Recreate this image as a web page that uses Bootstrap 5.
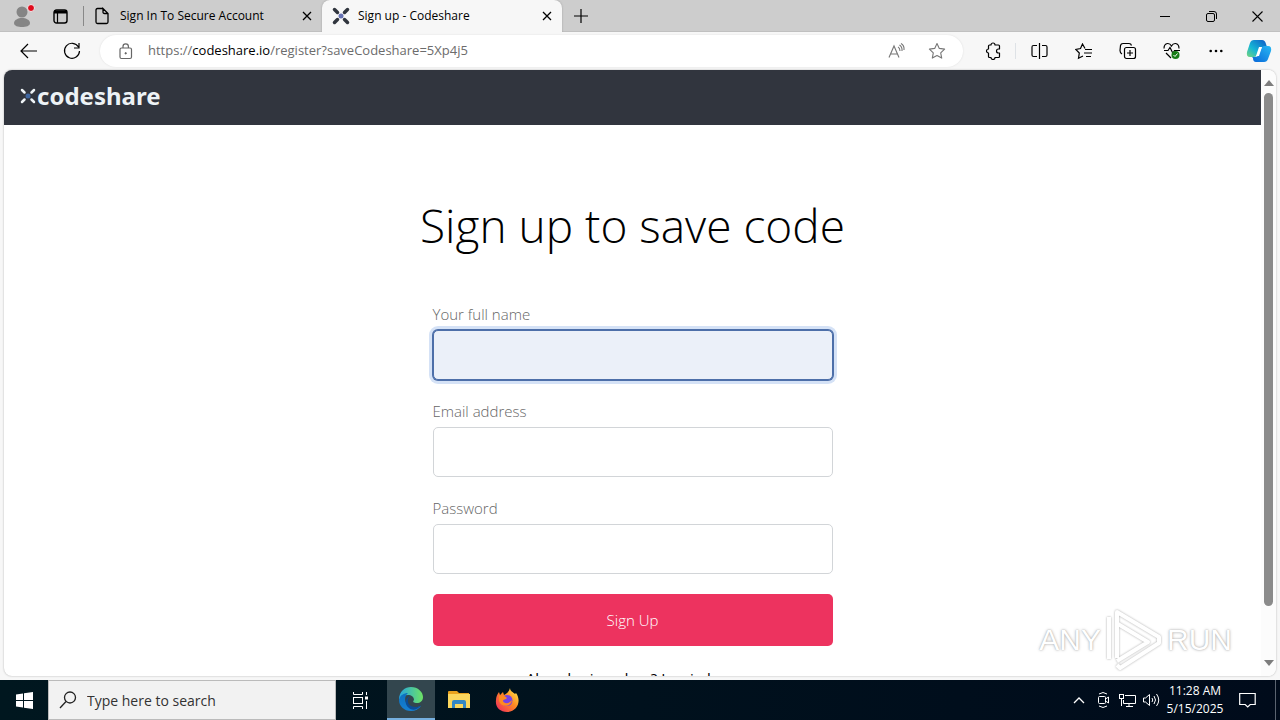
<!DOCTYPE html>
<html lang="en">
<head>
<meta charset="utf-8">
<meta name="viewport" content="width=device-width, initial-scale=1">
<title>Sign up - Codeshare</title>
<link href="https://cdn.jsdelivr.net/npm/bootstrap@5.3.0/dist/css/bootstrap.min.css" rel="stylesheet">
<style>
body{font-family:"Open Sans","Noto Sans",sans-serif;background:#f7f7f7;color:#000;fill:none;stroke:currentColor}
svg{display:block;flex:none}
button,.tool{border:0;background:none;padding:0;color:inherit;display:flex;align-items:center;justify-content:center}
.tabstrip{height:32px;background:#cdcdcd;font-size:12px;box-shadow:inset 0 -1px #c0c0c0}
.tab{width:238px;padding:0 10px;gap:10px}
.tab.on{width:240px;gap:8px;background:#f7f7f7;border-radius:8px 8px 0 0;box-shadow:0 0 2px #999;clip-path:inset(0 -3px 0 -3px)}
.strip-line{width:1px;height:20px;background:#888;margin-left:15px}
.wc{width:46px;height:32px}
.toolbar{height:38px;padding-left:6px}
.tool{width:44px;height:32px}
.tool.wide{width:46px}
.tool.slim{width:36px}
.tool.copilot{width:42px}
.address{height:32px;background:#fff;border-radius:16px;box-shadow:0 0 2px #ddd;font-size:13px;margin-left:6px}
.url{color:#6c6c6c}
.url b{font-weight:400;color:#000}
.divide{height:16px}
.viewport-box{margin:0 4px 4px;border-radius:8px;background:#fff;box-shadow:0 0 2px #aaa;min-height:0}
.site-head{height:55px;background:#31353e;padding:0 16px 4px}
.brand{font:bold 24px/32px "Noto Sans","Open Sans",sans-serif;color:#edf2f5}
.scroller{width:15px;background:#fcfcfc;padding:8px 0}
.thumb{width:9px;background:#8b8b8b;border-radius:5px;margin:6px 0 53px}
h1{font-size:46px;line-height:64px;font-weight:300;margin:68px 0 45px;white-space:nowrap}
.signup{width:400px;max-width:100%}
.signup label{display:block;font-size:15px;line-height:24px;font-weight:300;color:#666;margin-bottom:4px}
.signup .form-control{height:50px;border:1px solid #d2d5d8;border-radius:5px;margin-bottom:19px}
.signup .form-control:focus,.signup .first{background:#ebf0f9;border-color:#4d6fa9;box-shadow:0 0 0 1px #4d6fa9,0 0 0 4px #d5e2f6}
.signup .btn-go{background:#ed335f;color:#fff;height:52px;border-radius:5px;font-size:15px;font-weight:300;width:100%;margin-top:20px}
.login{font-size:15px;line-height:20px;margin:22px 0 0;font-weight:400}
.login a{color:#000;text-decoration:none}
.watermark{right:28px;bottom:4px;gap:4px;color:#fff;font:30px/60px "Liberation Sans",sans-serif;text-shadow:0 0 3px #aaa,0 0 1px #bbb;pointer-events:none}
.watermark svg{filter:drop-shadow(0 0 1px #aaa)}
.taskbar{height:40px;background:linear-gradient(90deg,#00171f,#000b1b);color:#fff}
.task{width:48px;height:40px}
.task.view{width:48px}
.task.on{background:#33464e;border-bottom:2px solid #76b0df;margin-left:3px}
.find{width:288px;background:#f2f2f2;border:1px solid #bbb;color:#222;padding-left:10px;gap:10px}
.find input{border:0;outline:0;background:none;font-size:14px;min-width:0;padding:0;color:#222}
.find input::placeholder{color:#333;opacity:1}
.tray{width:24px;height:40px}
.tray.note{width:40px}
.clock{width:64px;font:12px/18px "Open Sans",sans-serif;text-align:center;white-space:nowrap}
.peek{width:5px;height:40px;border-left:1px solid #5a6370}
</style>
</head>
<body class="vh-100 d-flex flex-column overflow-hidden">
<header class="tabstrip flex-shrink-0 d-flex align-items-center">
  <button class="ms-2 me-3" aria-label="Profile"><svg width="29" height="28" stroke="none"><circle cx="14" cy="10" r="5.5" fill="#858585"/><path d="M6 21c0-3 4-5 8-5s8 2 8 5-4 4-8 4-8-1-8-4z" fill="#858585"/><circle cx="23" cy="6" r="3.5" fill="#e00b1c" stroke="#eee"/></svg></button>
  <button aria-label="Tab actions"><svg width="15" height="15"><rect x="1" y="1" width="13" height="13" rx="2.5" stroke-width="1.4"/><path d="M1 3h13" stroke-width="3"/><path d="M4.500 4v10" stroke-width="1.200"/></svg></button>
  <span class="strip-line"></span>
  <div class="tab d-flex align-items-center h-100">
    <svg width="16" height="18"><path d="M9 1.500H3.500Q2 1.500 2 3v12q0 1.500 1.500 1.500h9Q14 16.500 14 15V6.500L9 1.500V5q0 1.500 1.500 1.500H14" stroke-width="1.300"/></svg>
    <span class="flex-grow-1 text-nowrap">Sign In To Secure Account</span>
    <button aria-label="Close tab"><svg width="10" height="10"><path d="M1 1l8 8M9 1L1 9" stroke-width="1.300"/></svg></button>
  </div>
  <div class="tab on d-flex align-items-center h-100">
    <svg width="18" height="18" stroke-width="3.500" stroke-linecap="round" stroke="#30353e"><path d="M2.500 2.500l3 3M15.500 2.500l-3 3M2.500 15.500l3-3M15.500 15.500l-3-3"/><circle cx="9" cy="9" r="2.500" fill="#6672b4" stroke="none"/></svg>
    <span class="flex-grow-1">Sign up - Codeshare</span>
    <button aria-label="Close tab"><svg width="10" height="10"><path d="M1 1l8 8M9 1L1 9" stroke-width="1.300"/></svg></button>
  </div>
  <button class="ms-2 ps-1" aria-label="New tab"><svg width="14" height="14"><path d="M7 0v14M0 7h14" stroke-width="1.200"/></svg></button>
  <div class="ms-auto d-flex">
    <button class="wc" aria-label="Minimize"><svg width="10" height="10"><path d="M0 5.500h10"/></svg></button>
    <button class="wc" aria-label="Restore"><svg width="11" height="11"><rect x=".5" y="2.500" width="8" height="8" rx="1.500"/><path d="M3 .5h5q2.500 0 2.500 2.500v5"/></svg></button>
    <button class="wc" aria-label="Close"><svg width="11" height="11"><path d="M.5.5l10 10M10.500.5l-10 10" stroke-width="1.100"/></svg></button>
  </div>
</header>
<nav class="toolbar flex-shrink-0 d-flex align-items-center" aria-label="Browser">
  <button class="tool" aria-label="Back"><svg width="17" height="16"><path d="M8 1L1 8l7 7M1 8h16" stroke-width="1.200"/></svg></button>
  <button class="tool" aria-label="Refresh"><svg width="18" height="18"><path d="M15.500 5A7.500 7.500 0 1 0 16.500 9M16 1v5h-5" stroke-width="1.200"/></svg></button>
  <div class="address flex-grow-1 d-flex align-items-center px-1">
    <button class="tool" aria-label="Site information"><svg width="14" height="17" stroke="#666"><rect x="1" y="5" width="11.500" height="10.500" rx="1.500" stroke-width="1.200"/><path d="M4 5V3.500a2.700 2.700 0 0 1 5.400 0V5" stroke-width="1.200"/><circle cx="6.700" cy="10.300" r=".7" fill="#555"/></svg></button>
    <span class="url flex-grow-1 text-nowrap">https://<b>codeshare.io</b>/register?saveCodeshare=5Xp4j5</span>
    <button class="tool slim" aria-label="Read aloud"><svg width="18" height="16" stroke="#777"><path d="M1 14.500L6 3l5 11.500M2.500 11h7M10 4q2 1 2 4M11.500 2q3 2 2.500 6M13 .5q3.500 2 3 6.500" stroke-width="1.100"/></svg></button>
    <button class="tool" aria-label="Add to favorites"><svg width="18" height="18" stroke="#777"><path d="M9 1.500l2.300 4.900 5.300.7-3.900 3.700 1 5.300L9 13.500l-4.700 2.600 1-5.300L1.400 7.100l5.300-.7z" stroke-width="1.100" stroke-linejoin="round"/></svg></button>
  </div>
  <button class="tool ms-2" aria-label="Extensions"><svg width="17" height="18"><path d="M4.500 3H6a2 2 0 0 1 4 0h3.500q1 0 1 1v3h-1a2 2 0 0 0 0 4h1v3.500q0 1-1 1H10a2 2 0 0 1-4 0H4.500q-1 0-1-1V11a2 2 0 0 1 0-4V4q0-1 1-1z" stroke-width="1.200" stroke-linejoin="round"/></svg></button>
  <span class="border-start divide"></span>
  <button class="tool wide" aria-label="Split screen"><svg width="17" height="16"><path d="M6 2.500H2.500Q1 2.500 1 4v8q0 1.500 1.500 1.500H6M11 2.500h3.500Q16 2.500 16 4v8q0 1.500-1.500 1.500H11M8.500 0v16" stroke-width="1.200"/></svg></button>
  <button class="tool" aria-label="Favorites"><svg width="18" height="17"><path d="M10 5.500L7.500 1 5.500 5.500.800 6.500l3.500 3.500-.8 5.300L8 13M10 6.500h7M9 10h8M11 13.500h5" stroke-width="1.200"/></svg></button>
  <button class="tool" aria-label="Collections"><svg width="18" height="18"><path d="M3 12Q1 11 1 8.500l.5-5Q2 1.500 4 1.500h6q2 0 2.500 2" stroke-width="1.200"/><rect x="5.500" y="5.500" width="11" height="11" rx="2" stroke-width="1.200"/><path d="M11 8v6M8 11h6" stroke-width="1.200"/></svg></button>
  <button class="tool" aria-label="Browser essentials"><svg width="18" height="18"><path d="M1 6.500Q1 2 4.500 1.500 7 1.300 8.500 4 10 1.300 12.500 1.500 16 2 16 6.500M1 8.500h4l2-3 3 6 1.500-3H17M3 11l5 5" stroke-width="1.200"/><circle cx="12.500" cy="13" r="4" fill="#187c18" stroke="none"/><path d="M10.500 13l1.500 1.500 2.500-3" stroke="#fff"/></svg></button>
  <button class="tool" aria-label="Settings and more"><svg width="14" height="4" fill="#000" stroke="none"><circle cx="1.700" cy="2" r="1.300"/><circle cx="7" cy="2" r="1.300"/><circle cx="12.300" cy="2" r="1.300"/></svg></button>
  <button class="tool copilot" aria-label="Copilot"><svg width="26" height="24" viewBox="0 0 26 24" stroke="none"><defs><linearGradient id="ca" x1="0" y1="1" x2="1" y2="0"><stop stop-color="#76d57b"/><stop offset=".4" stop-color="#16b6d5"/><stop offset="1" stop-color="#1058c7"/></linearGradient><linearGradient id="cb" x1="0" y1="1" x2="1" y2="0"><stop stop-color="#0866d8"/><stop offset="1" stop-color="#28b8f4"/></linearGradient></defs><path d="M8 1h8q3 0 4 4l1 3h-4q-3 0-4 3l-2 5q-1 2-3 2H4q-4 0-3-5L4 4q1-3 4-3z" fill="url(#ca)"/><path d="M18 23h-8q-3 0-3-4l-1-1h3q3 0 4-3l2-5q1-3 3-3h4q4 0 3 5l-3 8q-1 3-4 3z" fill="url(#cb)"/><path d="M13 8h3l-3 9h-3z" fill="#fff"/></svg></button>
</nav>
<section class="viewport-box flex-grow-1 d-flex overflow-hidden position-relative">
  <main class="flex-grow-1 overflow-hidden">
    <div class="site-head d-flex align-items-center">
      <a href="#" class="brand d-flex align-items-center text-decoration-none"><svg width="17" height="17" stroke-width="2.500" stroke-linecap="round"><path d="M2 3l2.500 2.500M14 3l-2.500 2.500M2 15l2.500-2.500M14 15l-2.500-2.500"/><circle cx="8" cy="9" r="2.500" fill="#3f66a0" stroke="none"/></svg><span>codeshare</span></a>
    </div>
    <div class="d-flex flex-column align-items-center">
      <h1>Sign up to save code</h1>
      <form class="signup">
        <label for="name">Your full name</label><input id="name" type="text" class="form-control first">
        <label for="mail">Email address</label><input id="mail" type="email" class="form-control">
        <label for="pass">Password</label><input id="pass" type="password" class="form-control">
        <button type="button" class="btn-go">Sign Up</button>
        <p class="login text-center">Already signed up? <a href="#">Log in here</a></p>
      </form>
    </div>
  </main>
  <div class="scroller d-flex flex-column align-items-center" aria-hidden="true">
    <svg width="10" height="9" fill="#7d7d7d" stroke="none"><path d="M0 8l5-6 5 6z"/></svg>
    <div class="thumb flex-grow-1"></div>
    <svg width="10" height="9" fill="#7d7d7d" stroke="none"><path d="M0 1l5 6 5-6z"/></svg>
  </div>
  <div class="watermark position-absolute d-flex align-items-center me-3"><span>ANY</span><svg width="58" height="64" viewBox="0 0 58 64" stroke="#fff" stroke-width="4" stroke-linejoin="round"><path d="M12 50V4l42 25v6L15 60l-3-3M13 16l30 18-31 19M4 9v42"/></svg><span>RUN</span></div>
</section>
<footer class="taskbar flex-shrink-0 d-flex align-items-center">
  <button class="task" aria-label="Start"><svg width="17" height="17" fill="#fff" stroke="none"><path d="M0 2.500l7-1V8H0zM8 1.300L17 0v8H8zM0 9h7v6.500l-7-1zM8 9h9v8l-9-1.300z"/></svg></button>
  <div class="find h-100 d-flex align-items-center"><svg width="18" height="18"><circle cx="11" cy="6.500" r="5.500" stroke-width="1.300"/><path d="M7 10.500L1 17" stroke-width="1.300"/></svg><input class="flex-grow-1" type="text" placeholder="Type here to search" aria-label="Search"></div>
  <button class="task view" aria-label="Task view"><svg width="17" height="17"><path d="M1.500 0v2.500h9V0M1.500 17v-2.500h9V17M14.500 0v3M14.500 9v8"/><rect x="1.500" y="5.500" width="9" height="6"/><path d="M13 6h3" stroke-width="3"/></svg></button>
  <button class="task on" aria-label="Edge"><svg width="26" height="26" stroke="none"><defs><linearGradient id="ea"><stop stop-color="#24a5df"/><stop offset="1" stop-color="#6ee364"/></linearGradient><linearGradient id="eb" x2="0" y2="1"><stop stop-color="#0e6fbe"/><stop offset="1" stop-color="#1580d3"/></linearGradient></defs><path d="M1 14C1 5 7 1 13 1c7 0 12 5 12 10 0 4-3 6-6 6-3 0-5-1-3-3 0-6-10-7-15 0z" fill="url(#ea)"/><path d="M1 14C2 9 6 7 10 7c-4 3-4 10 1 13 4 3 9 1 12 0-2 3-6 5-10 5C6 25 1 20 1 14z" fill="url(#eb)"/><path d="M12 10c-3 2-3 8 1 10 4 2 8 1 10-1-3 5-9 6-12 3-5-4-4-10 1-12z" fill="#0b4c97"/></svg></button>
  <button class="task" aria-label="File Explorer"><svg width="24" height="20" stroke="none"><path d="M1 2q0-1 1-1h8l2 2h10v5H1z" fill="#e9a21e"/><path d="M1 4h22v14H1z" fill="#fbd65d"/><path d="M5 18v-6q0-2 2-2h10q2 0 2 2v6h-3v-4H8v4z" fill="#3487c4"/></svg></button>
  <button class="task" aria-label="Firefox"><svg width="26" height="26" stroke="none"><defs><linearGradient id="fa" x1="1" y1="0" x2="0" y2="1"><stop stop-color="#fff44f"/><stop offset=".45" stop-color="#ff8a22"/><stop offset="1" stop-color="#ef2263"/></linearGradient></defs><path d="M16 1c0 3 3 4 5 6l1-1c6 8 1 19-9 19C6 25 1 20 2 13c0-3 1-5 3-8l1 3 3-3 1 3c2-1 5-3 6-7z" fill="url(#fa)"/><circle cx="13" cy="13.500" r="5.500" fill="#7542e5"/><path d="M5 9c4-1 6 0 8 2-1 2-4 1-4 3 1 3 6 3 9-1 0 6-10 9-13 1z" fill="#ff8a20"/></svg></button>
  <div class="ms-auto d-flex align-items-center">
    <button class="tray" aria-label="Show hidden icons"><svg width="12" height="8"><path d="M1 7l5-5 5 5" stroke-width="1.300"/></svg></button>
    <button class="tray" aria-label="Meet now"><svg width="12" height="18"><rect x="1.500" y="5.500" width="7" height="7" rx="1"/><path d="M8.500 8l3-2v6l-3-2M2 3q4-3 8 0M2 15q4 3 8 0"/></svg></button>
    <button class="tray" aria-label="Network"><svg width="17" height="15"><path d="M6 2.500h10.500v8h-12V7M10 10.500v3M7 13.500h7"/><rect x=".5" y="1.500" width="4" height="4"/><path d="M2.500 5v8"/></svg></button>
    <button class="tray" aria-label="Volume"><svg width="17" height="14"><path d="M.5 5v4h2l4 3.500v-11L2.500 5zM9 5q1.500 2 0 4M11 3q3 4 0 8M13.500 1q4.500 6 0 12"/></svg></button>
    <div class="clock">11:28 AM<br>5/15/2025</div>
    <button class="tray note" aria-label="Notifications"><svg width="17" height="17"><path d="M.7 1.500h15.500v11h-5l-2.500 2.500-2.500-2.500H.7z" stroke-width="1.200"/></svg></button>
    <span class="peek ms-2"></span>
  </div>
</footer>
<script src="https://cdn.jsdelivr.net/npm/bootstrap@5.3.0/dist/js/bootstrap.bundle.min.js"></script>
</body>
</html>
